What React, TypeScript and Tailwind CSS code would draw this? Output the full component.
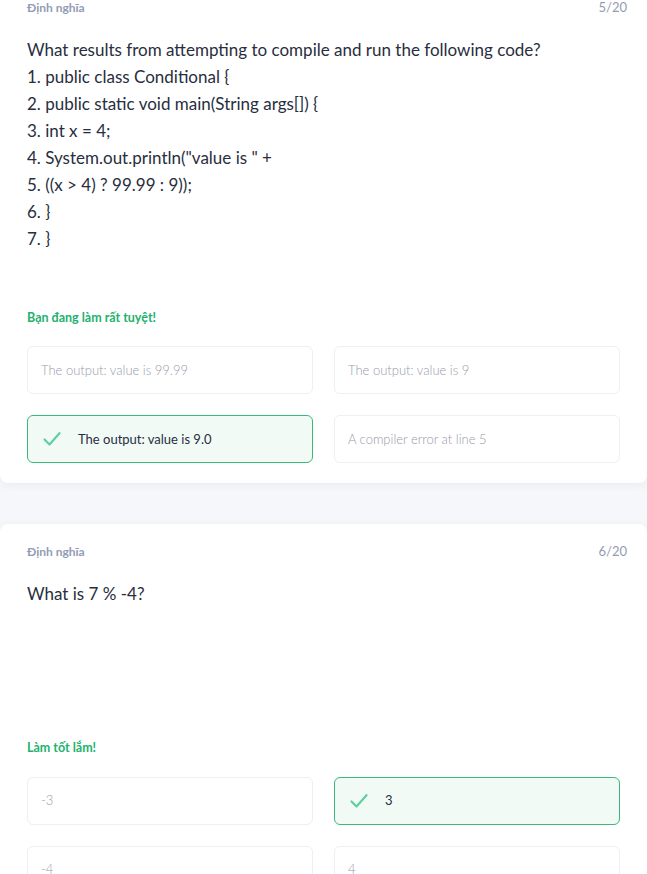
import React from 'react';

type Option = { text: string; correct?: boolean };

type Question = {
  index: string;
  lines: string[];
  feedback: string;
  options: Option[];
};

const questions: Question[] = [
  {
    index: '5/20',
    lines: [
      'What results from attempting to compile and run the following code?',
      '1. public class Conditional {',
      '2. public static void main(String args[]) {',
      '3. int x = 4;',
      '4. System.out.println("value is " +',
      '5. ((x > 4) ? 99.99 : 9));',
      '6. }',
      '7. }',
    ],
    feedback: 'Bạn đang làm rất tuyệt!',
    options: [
      { text: 'The output: value is 99.99' },
      { text: 'The output: value is 9' },
      { text: 'The output: value is 9.0', correct: true },
      { text: 'A compiler error at line 5' },
    ],
  },
  {
    index: '6/20',
    lines: ['What is 7 % -4?'],
    feedback: 'Làm tốt lắm!',
    options: [{ text: '-3' }, { text: '3', correct: true }, { text: '-4' }, { text: '4' }],
  },
];

function Check() {
  return (
    <svg width="20" height="20" viewBox="0 0 24 24" fill="none" stroke="#5fcf9c" strokeWidth="2.6" strokeLinecap="round" strokeLinejoin="round">
      <path d="M3 12.5l6 6L21 5" />
    </svg>
  );
}

function QuestionCard({ q }: { q: Question }) {
  return (
    <div className="bg-white rounded-lg shadow-[0_2px_10px_rgba(40,46,62,0.06)] px-[27px] pt-[18px] pb-5">
      <div className="flex items-center justify-between -mr-[7px]">
        <span className="text-[12px] font-bold text-[#939bb4]">Định nghĩa</span>
        <span className="text-[13px] text-[#939bb4]">{q.index}</span>
      </div>

      {/* question text */}
      <div className="mt-[18px] min-h-[102px] text-[17px] leading-[27px] text-[#282e3e]">
        {q.lines.map((l, i) => (
          <div key={i}>{l}</div>
        ))}
      </div>

      <div className="mt-[57px] text-[12.5px] font-bold text-[#23b26d]">{q.feedback}</div>

      <div className="mt-[19px] grid grid-cols-2 gap-x-[21px] gap-y-[21px]">
        {q.options.map((o, i) => (
          <div
            key={i}
            className={
              o.correct
                ? 'h-[48px] rounded-md border border-[#3cb97a] bg-[#f1faf5] flex items-center px-[14px] text-[13px] text-[#282e3e]'
                : 'h-[48px] rounded-md border border-[#edeff4] bg-white flex items-center px-[13px] text-[13px] font-light text-[#979ba8]'
            }
          >
            {o.correct && (
              <span className="mr-[16px] flex">
                <Check />
              </span>
            )}
            {o.text}
          </div>
        ))}
      </div>
    </div>
  );
}

export default function App() {
  return (
    <div className="min-h-screen bg-[#f6f7fb] font-['Lato',sans-serif] overflow-hidden">
      <div className="-mt-[20px] flex flex-col gap-[41px]">
        {questions.map((q) => (
          <QuestionCard key={q.index} q={q} />
        ))}
      </div>
    </div>
  );
}
